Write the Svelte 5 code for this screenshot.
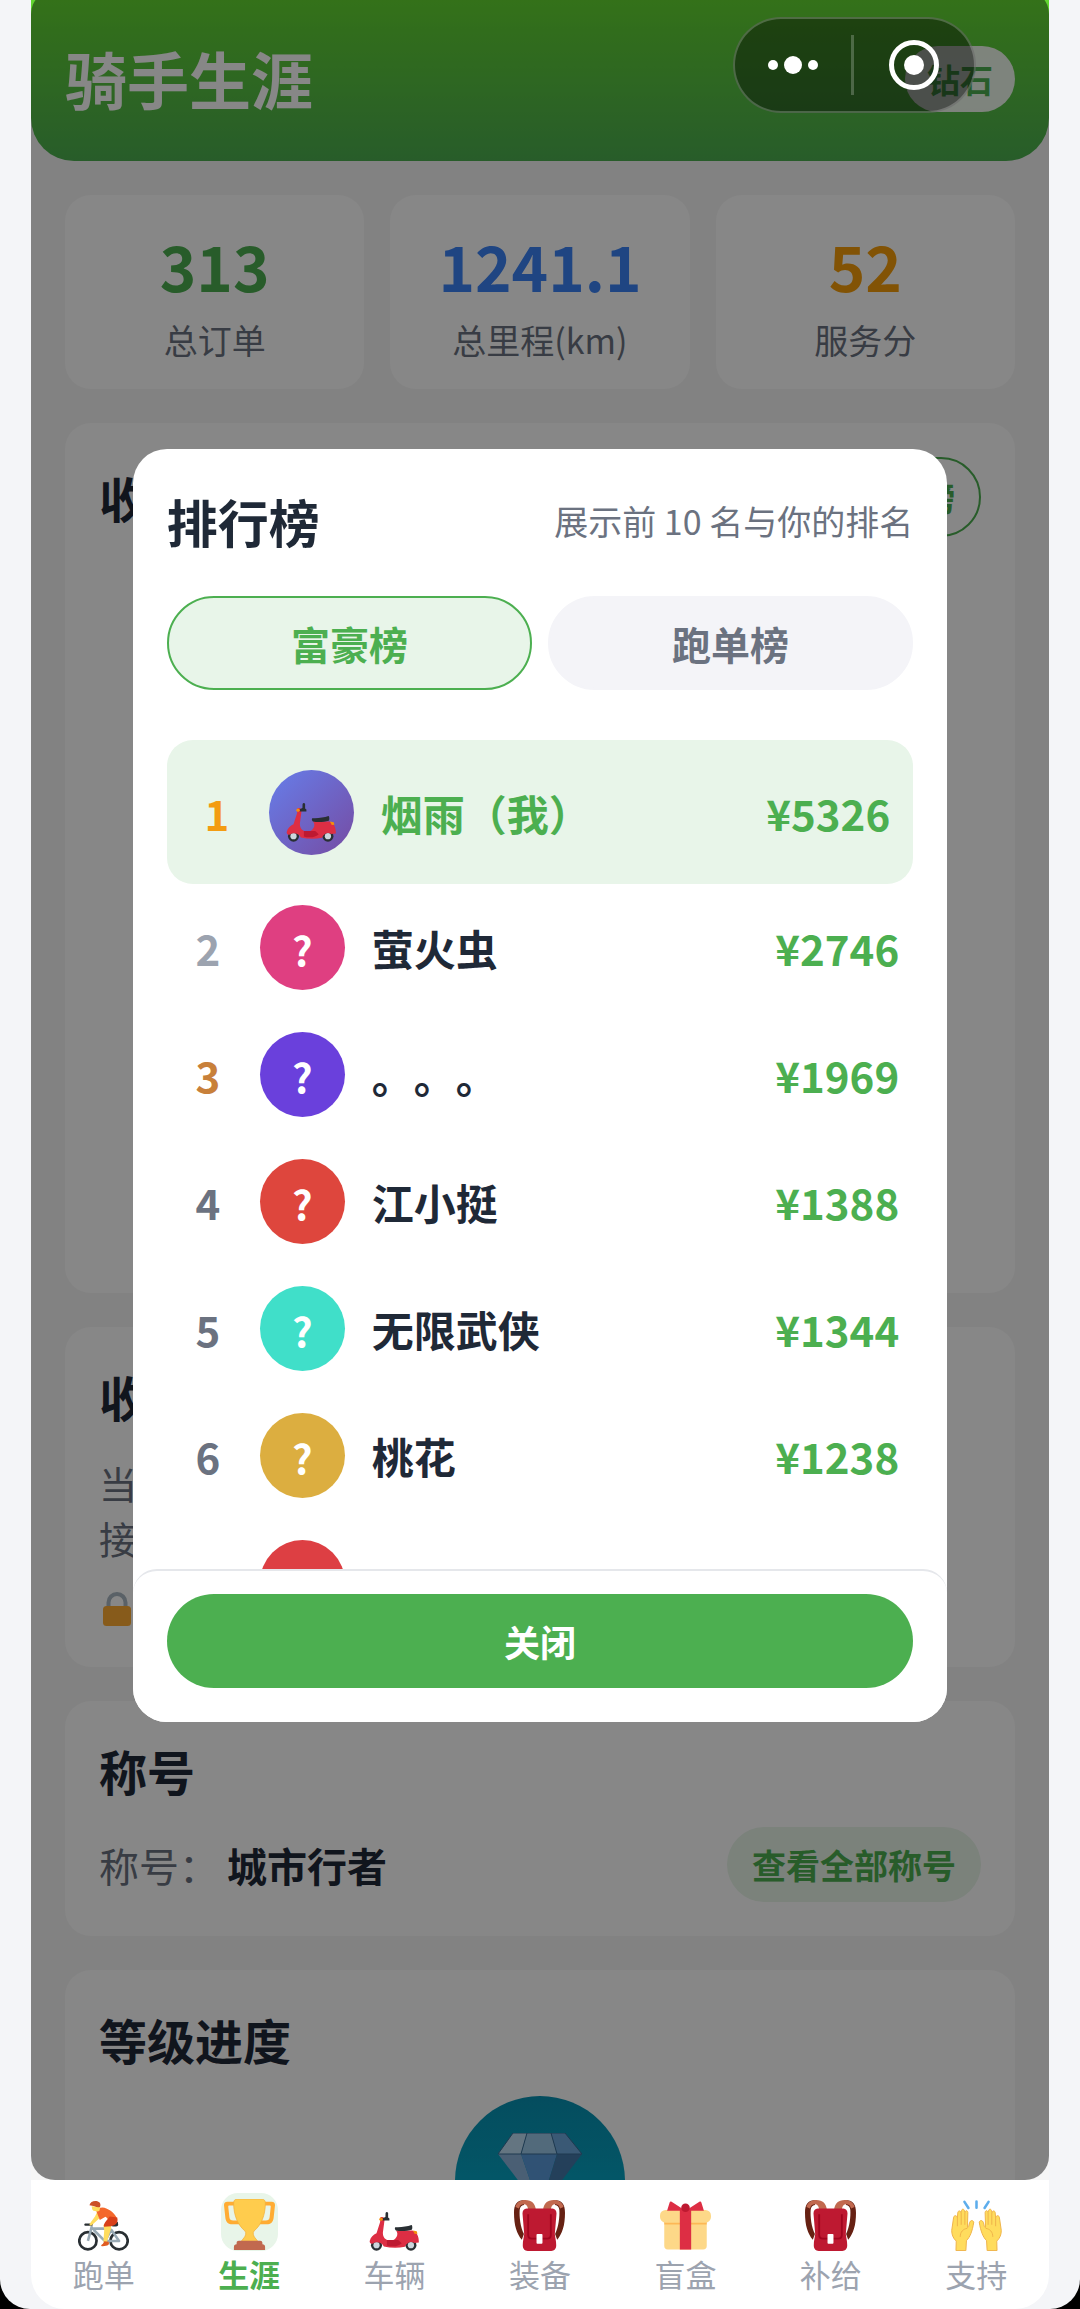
<script>
  const stats = [
    { label: '总订单', value: '313', color: '#4caf50' },
    { label: '总里程(km)', value: '1241.1', color: '#3b82f6' },
    { label: '服务分', value: '52', color: '#f59e0b' }
  ];

  const boards = ['富豪榜', '跑单榜'];
  let board = $state('富豪榜');

  const riders = [
    { rank: 1, name: '烟雨（我）', money: 5326, me: true },
    { rank: 2, name: '萤火虫', money: 2746, color: '#df3f81' },
    { rank: 3, name: '。。。', money: 1969, color: '#6a40dc' },
    { rank: 4, name: '江小挺', money: 1388, color: '#de463d' },
    { rank: 5, name: '无限武侠', money: 1344, color: '#40dfc9' },
    { rank: 6, name: '桃花', money: 1238, color: '#dcae40' },
    { rank: 7, name: '一一', money: 1102, color: '#dd3f43' }
  ];

  const rankColors = { 1: '#f39c12', 2: '#9ca3af', 3: '#c8803a' };

  const tabs = [
    { icon: 'bike', label: '跑单' },
    { icon: 'trophy', label: '生涯' },
    { icon: 'scooter', label: '车辆' },
    { icon: 'bag', label: '装备' },
    { icon: 'gift', label: '盲盒' },
    { icon: 'bag', label: '补给' },
    { icon: 'hands', label: '支持' }
  ];
  let current = $state('生涯');
  let open = $state(true);
</script>

{#snippet icon(name)}
  <svg class="icon" viewBox="0 0 36 36" aria-hidden="true">
    {#if name === 'bike'}
      <g fill="none" stroke="#292f33" stroke-width="1.9">
        <circle cx="7" cy="28.8" r="6.1" />
        <circle cx="29" cy="28.8" r="6.1" />
      </g>
      <path d="M9.8 18.5 7 28.8M10 20.2h12L19 29h10l-5.5-8L19 29l-8-8" fill="none" stroke="#99aab5" stroke-width="1.8" stroke-linejoin="round" />
      <path d="M5 16.6h4.5c1 0 1.3 1 .6 1.6H5.2c-1 0-1-1.5-.2-1.6zM23.5 17.5l4.6-2.2.3 2.4c-.3 1.2-3 1.4-4.9.6z" fill="#292f33" />
      <path d="M13.5 8.5l1.8 4.2-5.6 5.1c-1 .7-2.1-.2-1.3-1.2L12 11.7z" fill="#ffdc5d" />
      <path d="M18 17.5l5.2-1.6.2 4-3 9.9-2.5-.4.6-7.8z" fill="#ffdc5d" />
      <path d="M18.6 29.2l3 .3c.9 2.3-.4 3-4.2 3.1-1.5 0-1.2-1 .1-1.6z" fill="#e05c22" />
      <path d="M13 8.2c.6-2.6 4.1-3.7 7-2.2 4 1.6 6.9 4.7 7.7 7.6l-5.6 2.7c-.5-2.6-1.4-3.8-2.7-4.5l-4 2.3z" fill="#f4682c" />
      <path d="M22.4 11.6l5.3.8c.9 3.8-1 5.6-4.4 6.1l-5 .4c-.5-2 1.8-4.5 4.1-7.3z" fill="#d8401a" />
      <path d="M9.7 4.4l6 .8-.6 2.4c-1 .8-2.2.5-2.9.1-1.7.2-2.5-1-2.5-3.3z" fill="#ffdc5d" />
      <path d="M8.1 3.7C8.6.8 12.6-.2 15 1.6c1.2 1 1 3.1.1 3.5-2.3.4-4-1.3-7-1.4z" fill="#cb4f25" />
    {:else if name === 'trophy'}
      <path d="M7.4 2H2.3C.8 2-.1 3 0 4.4l1 9.2c.5 3 2.200 4.300 4.800 4.300h6.300v-2.700H6.500c-1.700 0-2.500-.8-2.700-2.300L3 5.400c0-.6.3-.8.8-.8h4zM28.600 2h5.100c1.500 0 2.400 1 2.300 2.400l-1 9.200c-.5 3-2.200 4.300-4.800 4.300h-6.300v-2.700h5.600c1.700 0 2.500-.8 2.700-2.300l.8-7.500c0-.6-.3-.8-.8-.8h-4z" fill="#ffac33" />
      <path d="M9.4 0h17.200c1.800 0 2.600 1.200 2.600 2.800 0 9-3.100 15.700-8 19.800-1 1-.6 3.400.7 4.800L24 30H12l2.100-2.600c1.300-1.400 1.700-3.800.7-4.800-4.900-4.100-8-10.800-8-19.800C6.800 1.200 7.600 0 9.400 0z" fill="#ffcc4d" stroke="#f2ae3a" stroke-width=".5" />
      <path d="M10.500 29.500h15c1 0 1.600.6 1.600 1.500v1c1.200 0 1.900.8 1.900 1.900V36H7v-2.100c0-1.100.7-1.900 1.900-1.900v-1c0-.9.600-1.500 1.600-1.500z" fill="#c1694f" />
    {:else if name === 'scooter'}
      <circle cx="5.3" cy="31.9" r="3.9" fill="#292f33" />
      <circle cx="29.6" cy="31.9" r="3.9" fill="#292f33" />
      <circle cx="5.3" cy="31.9" r="2.2" fill="#ccd6dd" />
      <circle cx="29.6" cy="31.9" r="2.2" fill="#ccd6dd" />
      <path d="M8 12.300c1.600-.8 3 0 3 1.700l-1.200 9c-.1 3.200 1.800 5.500 4.600 5.700 2.500.2 3.900-.7 5.100-2.700.8-1.500.7-3.200-.4-4.500h11.500c3 1 4.700 3.900 4.600 8.500l-3.200.3c-2.500-1.300-5-.6-6.600 2.700-4.600 1-9.900 1-14.900-.2-1.700-3-5.100-3.700-8-2-.9.500-2.300-.5-2-1.800.7-3 2.500-4.600 4.800-5.600L7.700 16c.3-1 .3-1.500 0-2.200z" fill="#dd2e44" />
      <path d="M12.600 28.300h8l2.500 2.200c-2 2.200-6.600 2.800-10.500 1.600z" fill="#be1931" />
      <path d="M18.500 19.200c4.100.3 8-.4 11.500-1.500.7.2.8 2.800.2 3.300-3.500 1-8 1.200-11.200.5-.7-.5-1-1.700-.5-2.300zM11.700 9.100c.3-.8 1.500-.8 1.800 0v3.200l.9.800v1.300H9.600v-1.600l2-.8z" fill="#292f33" />
      <circle cx="8.5" cy="13.500" r="1.200" fill="#f4900c" />
      <path d="M31 21.500l2.700.6.5 1.700-1.900.2z" fill="#f4900c" />
    {:else if name === 'bag'}
      <path d="M8 0C2 0 0 3 0 9c0 9 2 15 5.500 19l1.500-4C4.500 19 3.700 12 4 7c.2-2 1.200-3.500 3-3.500zM28 0c6 0 8 3 8 9 0 9-2 15-5.500 19L29 24c2.500-5 3.300-12 3-17-.2-2-1.200-3.500-3-3.500z" fill="#662113" />
      <path d="M1 5C1.800 1.500 4.500 0 8 0c4.500 0 7 2.500 7.500 7H10C9.700 4 8.500 3 7 3 5 3 4 4 3.500 6zM35 5c-.8-3.500-3.500-5-7-5-4.500 0-7 2.500-7.500 7H26c.3-3 1.500-4 3-4 2 0 3 1 3.500 3z" fill="#c1694f" />
      <path d="M9 6h18c2 0 3 1.500 3 3.500L28.800 24c.3 3 1 4.500 1 8 0 2.500-1.300 4-3.500 4H9.700c-2.200 0-3.500-1.500-3.500-4 0-3.500.7-5 1-8L6 9.500C6 7.500 7 6 9 6z" fill="#be1931" />
      <path d="M10 10v14.500c0 1.800 1 2.800 2.700 2.800h10.600c1.700 0 2.700-1 2.700-2.800V10" fill="none" stroke="#a0041e" stroke-width="1.3" />
      <rect x="15.900" y="24" width="4.200" height="6.800" rx=".6" fill="#fff" />
    {:else if name === 'gift'}
      <path d="M3 15h30v17.500c0 1.600-.9 2.500-2.500 2.500h-25C3.900 35 3 34.100 3 32.500z" fill="#fdd888" />
      <path d="M3 15h30v2.300H3z" fill="#fcab40" opacity=".7" />
      <rect y="7" width="36" height="9" rx="4" fill="#fdd888" />
      <path d="M14 7h8v28h-8z" fill="#dd2e44" />
      <path d="M18 7.500L8.200 1.200C7.500.8 7 1 6.800 1.700L5 7.500zM18 7.500l9.800-6.300c.7-.4 1.200-.2 1.400.5L31 7.500z" fill="#dd2e44" />
      <circle cx="18" cy="5.500" r="3" fill="#be1931" />
    {:else}
      <path d="M9.500 1.300l2.800 4.300M18 1v4.500M26.500 1.300l-2.800 4.300" stroke="#5dadec" stroke-width="1.8" stroke-linecap="round" />
      <g fill="#ffdc5d" stroke="#efb34a" stroke-width=".7">
        <path d="M3.500 35.700h7l.4-7c2.600-2.700 4.100-6.500 5.200-13.200-1.600-2.200-3.100-.8-3.600 3.200l-.9.800.3-10.700c-.2-1.700-1.800-1.700-2 0L9.500 7.700c-.2-1.600-2-1.600-2.100 0l-.3 1.200c-.3-1.700-2.300-1.500-2.300.2l-.3 3.200c-.5-1.800-2.600-1.600-2.700.3L.5 21.500c0 3 1 5.500 3.200 7.500z" />
        <path d="M32.500 35.700h-7l-.4-7c-2.600-2.700-4.100-6.500-5.200-13.200 1.600-2.200 3.100-.8 3.600 3.200l.9.800-.3-10.700c.2-1.700 1.800-1.700 2 0l.4-1.100c.2-1.600 2-1.600 2.100 0l.3 1.200c.3-1.700 2.300-1.500 2.300.2l.3 3.200c.5-1.800 2.600-1.600 2.700.3l1.300 8.900c0 3-1 5.500-3.200 7.500z" />
        <path d="M4.500 12v6.500M7.200 9v8.500M9.800 9v8.500M31.500 12v6.500M28.800 9v8.500M26.200 9v8.500M6.500 26c0-3.500 2-5.500 5-6M29.500 26c0-3.500-2-5.500-5-6" fill="none" />
      </g>
    {/if}
  </svg>
{/snippet}

<div class="screen">
  <main class="page">
    <header class="header">
      <h1>骑手生涯</h1>
      <span class="level">钻石</span>
    </header>

    <div class="content">
      <section class="stats">
        {#each stats as stat}
          <div class="stat">
            <strong style="color: {stat.color}">{stat.value}</strong>
            <span>{stat.label}</span>
          </div>
        {/each}
      </section>

      <section class="card chart">
        <div class="card-head">
          <h2>收入</h2>
          <button class="outline" onclick={() => (open = true)}>排行榜</button>
        </div>
      </section>

      <section class="card">
        <h2>收益</h2>
        <p class="desc">当前<br />接单</p>
        <svg class="lock" viewBox="0 0 36 36" aria-hidden="true">
          <path d="M9.500 18v-6.500a8.500 8.500 0 0 1 17 0V18" fill="none" stroke="#aab8c2" stroke-width="4" />
          <rect x="4" y="15" width="28" height="20" rx="3.500" fill="#ffac33" />
        </svg>
      </section>

      <section class="card">
        <h2>称号</h2>
        <div class="title-row">
          <span>称号：</span>
          <strong>城市行者</strong>
          <button class="pill">查看全部称号</button>
        </div>
      </section>

      <section class="card">
        <h2>等级进度</h2>
        <div class="medal">
          <svg viewBox="0 0 84 76" aria-hidden="true">
            <path d="M15 0h14l-6 21H0z" fill="#bdddf4" />
            <path d="M29 0h24l6 21H23z" fill="#9cc8e8" />
            <path d="M53 0h14l17 21H59z" fill="#6fa8dd" />
            <path d="M0 21h23l19 55z" fill="#8cb4dc" />
            <path d="M23 21h36L42 76z" fill="#5c9bdb" />
            <path d="M59 21h25L42 76z" fill="#4479aa" />
            <path d="M15 0h52l17 21H0zM29 0l-6 21M53 0l6 21" fill="none" stroke="#3b6c96" stroke-width="1" />
          </svg>
        </div>
      </section>
    </div>

    {#if open}
      <div class="overlay">
        <div class="modal" role="dialog" aria-labelledby="board-title">
          <div class="modal-head">
            <h2 id="board-title">排行榜</h2>
            <span>展示前 10 名与你的排名</span>
          </div>

          <div class="boards">
            {#each boards as item}
              <button class:active={board === item} onclick={() => (board = item)}>{item}</button>
            {/each}
          </div>

          <ol class="list">
            {#each riders as rider}
              <li class:me={rider.me}>
                <span class="rank" style="color: {rankColors[rider.rank] ?? '#6b7280'}">{rider.rank}</span>
                {#if rider.me}
                  <span class="avatar own">{@render icon('scooter')}</span>
                {:else}
                  <span class="avatar" style="background: {rider.color}">?</span>
                {/if}
                <span class="name">{rider.name}</span>
                <span class="money">¥{rider.money}</span>
              </li>
            {/each}
          </ol>

          <div class="modal-foot">
            <button onclick={() => (open = false)}>关闭</button>
          </div>
        </div>
      </div>
    {/if}

    <div class="capsule">
      <button aria-label="更多">
        <svg width="52" height="20" viewBox="0 0 52 20" fill="#fff">
          <circle cx="6" cy="10" r="5" />
          <circle cx="26" cy="10" r="9" />
          <circle cx="46" cy="10" r="5" />
        </svg>
      </button>
      <button aria-label="退出">
        <svg width="52" height="52" viewBox="0 0 52 52">
          <circle cx="26" cy="26" r="22.5" fill="none" stroke="#fff" stroke-width="5" />
          <circle cx="26" cy="26" r="10" fill="#fff" />
        </svg>
      </button>
    </div>
  </main>

  <nav class="tabbar">
    {#each tabs as tab}
      <button class:active={current === tab.label} onclick={() => (current = tab.label)}>
        <span class="tab-icon">{@render icon(tab.icon)}</span>
        <span>{tab.label}</span>
      </button>
    {/each}
  </nav>
</div>

<style>
  :global(body) {
    background: #000;
  }

  .screen {
    display: flex;
    flex-direction: column;
    box-sizing: border-box;
    height: 100vh;
    padding: 0 31px;
    overflow: hidden;
    background: #f4f5f8;
    border-radius: 0 0 30px 30px;
    font-family: 'Noto Sans CJK SC', sans-serif;
    color: #1f2937;
    text-spacing-trim: space-all;
  }

  h1,
  h2,
  p,
  ol {
    margin: 0;
    padding: 0;
  }

  button {
    padding: 0;
    border: none;
    background: none;
    font-family: inherit;
    cursor: pointer;
  }

  .icon {
    display: block;
    width: 51px;
    height: 51px;
  }

  .page {
    position: relative;
    flex: 1;
    min-height: 0;
    overflow: hidden;
    background: #f6f6f6;
  }

  .header {
    display: flex;
    align-items: center;
    justify-content: space-between;
    padding: 34px 34px 38px;
    background: linear-gradient(#62d630, #4caf50);
    border-radius: 0 0 43px 43px;
  }

  .header h1 {
    font-size: 62px;
    line-height: 89px;
    color: #fff;
  }

  .level {
    padding: 0 22px;
    border-radius: 33px;
    background: rgba(255, 255, 255, 0.9);
    font-size: 33px;
    font-weight: 700;
    line-height: 66px;
    color: #4caf50;
  }

  .content {
    display: flex;
    flex-direction: column;
    gap: 34px;
    padding: 34px;
  }

  .stats {
    display: flex;
    gap: 26px;
  }

  .stat {
    flex: 1;
    display: flex;
    flex-direction: column;
    align-items: center;
    gap: 14px;
    padding: 34px 0 24px;
    border-radius: 26px;
    background: #fff;
  }

  .stat strong {
    font-size: 62px;
    line-height: 72px;
  }

  .stat span {
    font-size: 34px;
    line-height: 50px;
    color: #6b7280;
  }

  .card {
    padding: 34px;
    border-radius: 26px;
    background: #fff;
  }

  .card h2 {
    font-size: 48px;
    line-height: 70px;
  }

  .chart {
    min-height: 802px;
  }

  .card-head {
    display: flex;
    align-items: center;
    justify-content: space-between;
  }

  .outline {
    padding: 0 24px;
    border: 2px solid #4caf50;
    border-radius: 40px;
    font-size: 34px;
    font-weight: 700;
    line-height: 76px;
    color: #4caf50;
  }

  .desc {
    margin-top: 24px;
    font-size: 38px;
    line-height: 55px;
    color: #6b7280;
  }

  .lock {
    display: block;
    width: 36px;
    height: 36px;
    margin: 26px 0 6px;
  }

  .title-row {
    display: flex;
    align-items: center;
    margin-top: 22px;
    font-size: 40px;
  }

  .title-row span {
    color: #6b7280;
  }

  .title-row strong {
    margin-left: 8px;
  }

  .pill {
    margin-left: auto;
    padding: 0 25px;
    border-radius: 38px;
    background: #e8f5e9;
    font-size: 34px;
    font-weight: 700;
    line-height: 75px;
    color: #4caf50;
  }

  .medal {
    display: flex;
    align-items: center;
    justify-content: center;
    width: 170px;
    height: 170px;
    margin: 22px auto 0;
    border-radius: 50%;
    background: linear-gradient(#0891b2, #06b6d4);
  }

  .medal svg {
    width: 84px;
    height: 76px;
    margin-bottom: 20px;
  }

  .overlay {
    position: absolute;
    inset: -10px 0 0;
    display: flex;
    align-items: center;
    justify-content: center;
    border-radius: 24px;
    background: rgba(0, 0, 0, 0.47);
  }

  .modal {
    width: 80%;
    border-radius: 34px;
    background: #fff;
    overflow: hidden;
  }

  .modal-head {
    display: flex;
    align-items: center;
    justify-content: space-between;
    padding: 34px 34px 0;
  }

  .modal-head h2 {
    font-size: 51px;
    line-height: 76px;
  }

  .modal-head span {
    font-size: 34px;
    color: #6b7280;
  }

  .boards {
    display: flex;
    gap: 16px;
    padding: 37px 34px 50px;
  }

  .boards button {
    flex: 1;
    border: 2px solid #f4f4f8;
    border-radius: 47px;
    background: #f4f4f8;
    font-size: 39px;
    font-weight: 700;
    line-height: 90px;
    color: #6b7280;
  }

  .boards button.active {
    border-color: #4caf50;
    background: #e8f5e9;
    color: #4caf50;
  }

  .list {
    max-height: 829px;
    margin: 0 34px;
    overflow: hidden auto;
    scrollbar-width: none;
    list-style: none;
  }

  .list li {
    display: flex;
    align-items: center;
    gap: 27px;
    padding: 21px 14px 21px 16px;
    font-size: 42px;
    font-weight: 700;
  }

  .list li.me {
    padding: 30px 23px 29px 25px;
    border-radius: 26px;
    background: #e8f5e9;
  }

  .rank {
    width: 50px;
    text-align: center;
  }

  .avatar {
    display: flex;
    align-items: center;
    justify-content: center;
    box-sizing: border-box;
    width: 85px;
    height: 85px;
    padding-top: 4px;
    border-radius: 50%;
    font-size: 40px;
    line-height: 60px;
    color: #fff;
  }

  .avatar.own {
    padding-top: 8px;
    background: linear-gradient(135deg, #667eea, #764ba2);
  }

  .name {
    flex: 1;
    padding-top: 2px;
    line-height: 60px;
  }

  .me .name,
  .money {
    color: #4caf50;
  }

  .modal-foot {
    padding: 23px 34px 34px;
    border-top: 2px solid #e5e7eb;
    border-radius: 24px;
    background: #fff;
  }

  .modal-foot button {
    width: 100%;
    border-radius: 47px;
    background: #4caf50;
    font-size: 36px;
    font-weight: 700;
    line-height: 94px;
    color: #fff;
  }

  .capsule {
    position: absolute;
    top: 17px;
    right: 73px;
    display: flex;
    align-items: center;
    border: 2px solid rgba(255, 255, 255, 0.22);
    border-radius: 48px;
    background: rgba(0, 0, 0, 0.4);
  }

  .capsule button {
    display: flex;
    align-items: center;
    justify-content: center;
    width: 116px;
    height: 92px;
  }

  .capsule button + button {
    justify-content: flex-start;
    width: 123px;
  }

  .capsule button + button::before {
    content: '';
    width: 3px;
    height: 60px;
    margin-right: 34px;
    background: rgba(255, 255, 255, 0.22);
  }

  .tabbar {
    display: flex;
    padding: 13px 0 12px;
    border-radius: 0 0 34px 34px;
    background: #fff;
  }

  .tabbar button {
    flex: 1;
    display: flex;
    flex-direction: column;
    align-items: center;
    font-size: 31px;
    line-height: 46px;
    color: #9ca3af;
  }

  .tab-icon {
    padding: 7px 3px 0;
    border-radius: 17px;
  }

  .active .tab-icon {
    padding: 6px 3px 1px;
    background: #e8f5e9;
  }

  .tabbar .active {
    font-weight: 700;
    color: #4caf50;
  }
</style>
